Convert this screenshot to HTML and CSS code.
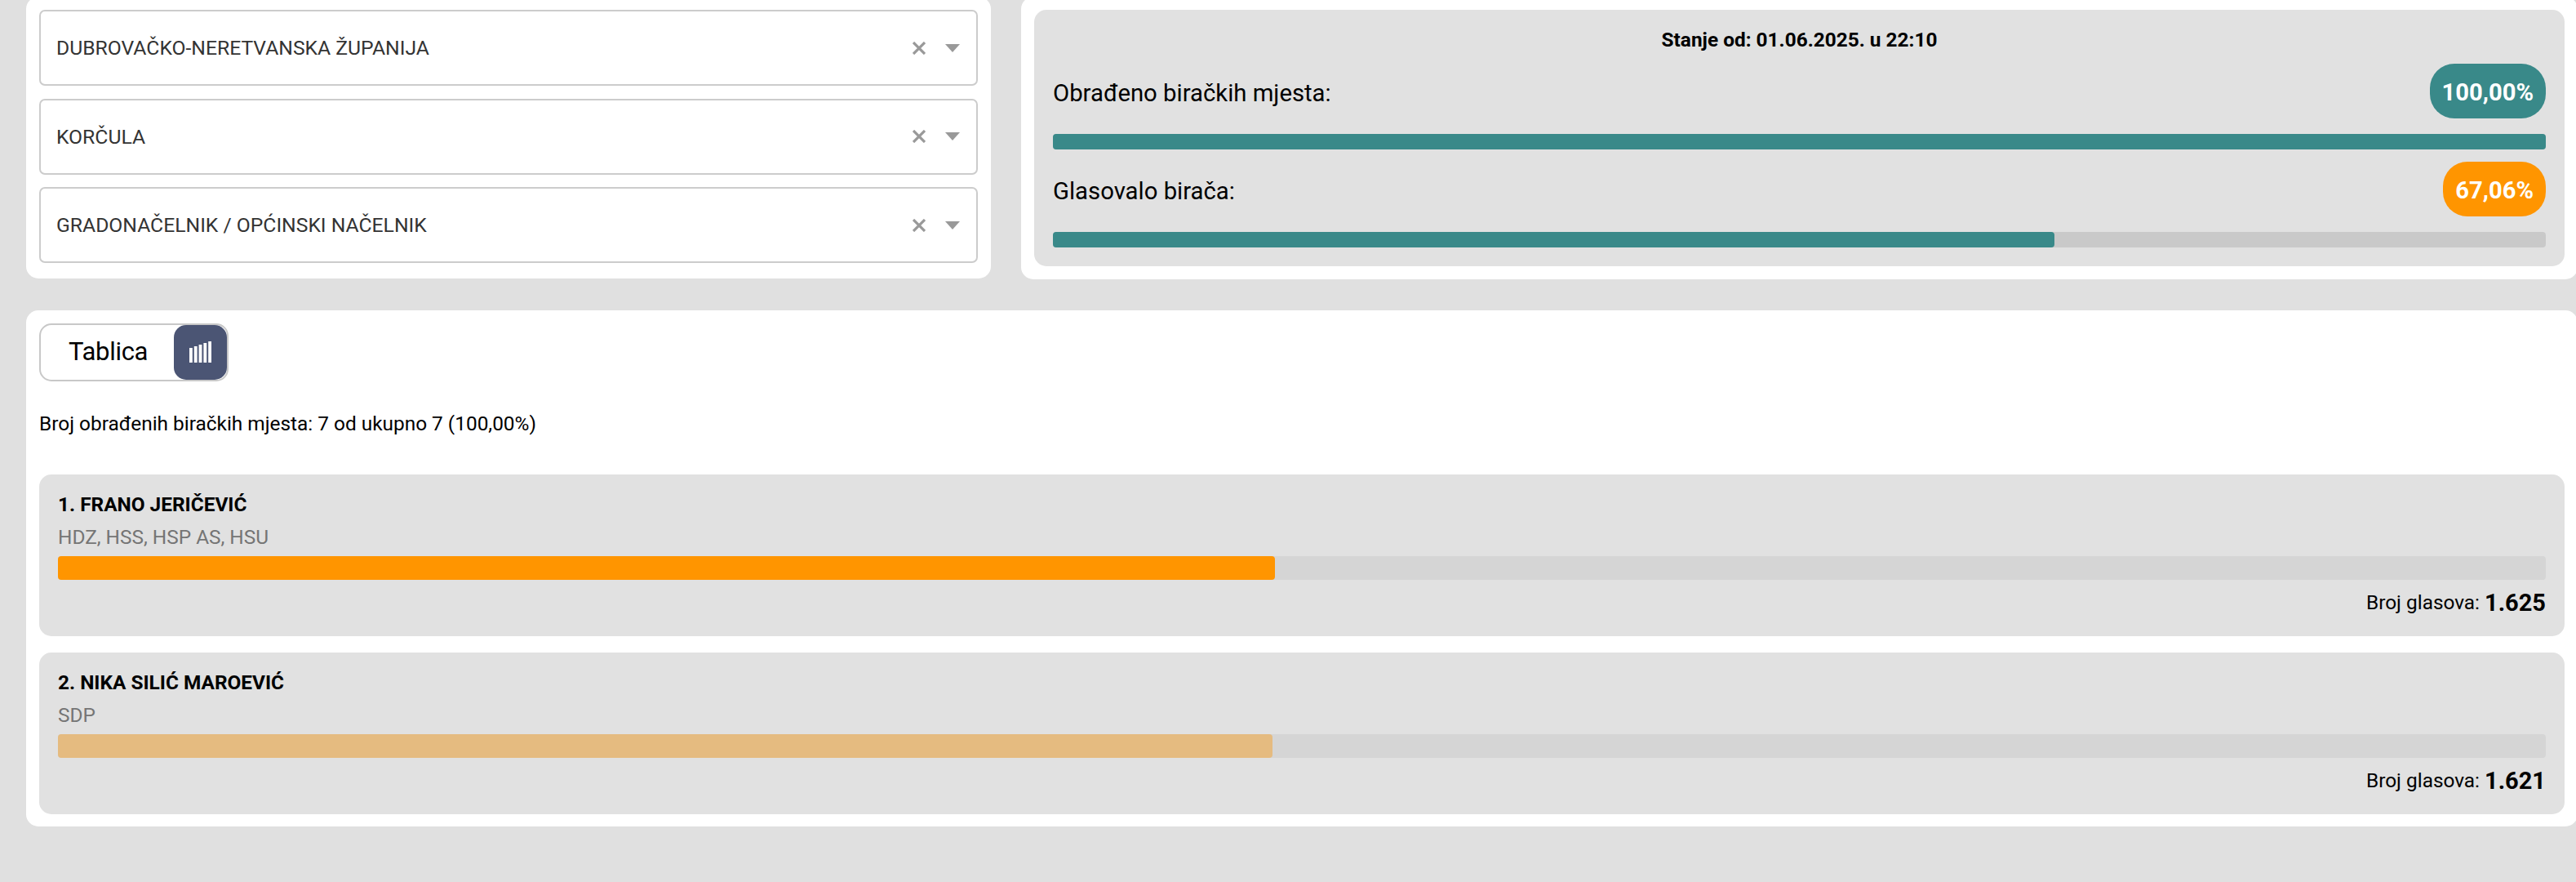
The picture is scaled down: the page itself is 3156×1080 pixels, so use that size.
FILE: index.html
```html
<!DOCTYPE html>
<html lang="hr">
<head>
    <meta charset="UTF-8">
    <meta name="viewport" content="width=device-width, initial-scale=1.0">
    <title>Rezultati izbora</title>
    <link rel="stylesheet" href="styles.css">
</head>
<body>
    <div class="page">
        <div class="top">
            <!-- Filters -->
            <div class="panel filters">
                <div class="select">
                    <span class="value">DUBROVAČKO-NERETVANSKA ŽUPANIJA</span>
                    <svg class="clear" viewBox="0 0 16 16"><path d="M1 1L15 15M15 1L1 15"/></svg>
                    <span class="arrow"></span>
                </div>
                <div class="select">
                    <span class="value">KORČULA</span>
                    <svg class="clear" viewBox="0 0 16 16"><path d="M1 1L15 15M15 1L1 15"/></svg>
                    <span class="arrow"></span>
                </div>
                <div class="select">
                    <span class="value">GRADONAČELNIK / OPĆINSKI NAČELNIK</span>
                    <svg class="clear" viewBox="0 0 16 16"><path d="M1 1L15 15M15 1L1 15"/></svg>
                    <span class="arrow"></span>
                </div>
            </div>

            <!-- Turnout -->
            <div class="panel status">
                <div class="card turnout">
                    <div class="updated">Stanje od: 01.06.2025. u 22:10</div>
                    <div class="row">
                        <span class="label">Obrađeno biračkih mjesta:</span>
                        <span class="badge">100,00%</span>
                    </div>
                    <div class="progress"><div class="fill" style="width: 100%"></div></div>
                    <div class="row">
                        <span class="label">Glasovalo birača:</span>
                        <span class="badge orange">67,06%</span>
                    </div>
                    <div class="progress"><div class="fill" style="width: 67.06%"></div></div>
                </div>
            </div>
        </div>

        <!-- Results -->
        <div class="panel results">
            <div class="toggle">
                <span class="toggle-text">Tablica</span>
                <button type="button" class="toggle-chart" aria-label="Grafikon">
                    <svg viewBox="0 0 27 26"><path d="M0 8h3.8v18H0zM5.8 6h3.8v20H5.8zM11.6 4h3.8v22h-3.8zM17.4 2h3.8v24h-3.8zM23.2 0H27v26h-3.8z"/></svg>
                </button>
            </div>
            <p class="summary">Broj obrađenih biračkih mjesta: 7 od ukupno 7 (100,00%)</p>

            <div class="card candidate">
                <div class="name">1. FRANO JERIČEVIĆ</div>
                <div class="party">HDZ, HSS, HSP AS, HSU</div>
                <div class="votes-bar"><div class="fill" style="width: 48.93%"></div></div>
                <div class="votes">Broj glasova: <b>1.625</b></div>
            </div>
            <div class="card candidate second">
                <div class="name">2. NIKA SILIĆ MAROEVIĆ</div>
                <div class="party">SDP</div>
                <div class="votes-bar"><div class="fill" style="width: 48.81%"></div></div>
                <div class="votes">Broj glasova: <b>1.621</b></div>
            </div>
        </div>
    </div>
</body>
</html>
```
FILE: styles.css
```css
* {
    box-sizing: border-box;
}

body {
    margin: 0;
    height: 1080px;
    overflow: hidden;
    background-color: #e0e0e0;
    font-family: Roboto, Arial, sans-serif;
    font-size: 24.4px;
    color: #000;
}

.page {
    width: 3126px;
    margin: -4px 0 0 32px;
}

.panel {
    padding: 16px;
    background-color: #fff;
    border-radius: 15px;
}

.card {
    background-color: #e1e1e1;
    border-radius: 15px;
}

.top {
    display: flex;
    gap: 37px;
    margin-bottom: 38px;
}

/* Filters */
.filters {
    display: flex;
    flex-direction: column;
    gap: 15.5px;
    width: 1182px;
    height: 345px;
}

.select {
    display: flex;
    align-items: center;
    height: 93px;
    padding: 0 20px 0 19px;
    border: 2px solid #ccc;
    border-radius: 7px;
}

.value {
    flex: 1;
    font-size: 24.7px;
    color: #333;
}

.clear {
    width: 16px;
    height: 16px;
    margin-right: 24px;
    stroke: #999;
    stroke-width: 3.2;
}

.arrow {
    border-top: 10px solid #999;
    border-left: 9.5px solid transparent;
    border-right: 9.5px solid transparent;
}

/* Turnout */
.status {
    flex: 1;
}

.turnout {
    height: 314px;
    padding: 22px 23px 0;
}

.updated {
    height: 44px;
    line-height: 29px;
    text-align: center;
    font-weight: bold;
}

.row {
    display: flex;
    justify-content: space-between;
    align-items: center;
    height: 67px;
}

.label {
    padding-top: 4px;
    font-size: 29.3px;
}

.badge {
    height: 67px;
    padding: 2px 15px 0;
    line-height: 67px;
    border-radius: 30px;
    background-color: #398989;
    color: #fff;
    font-size: 29.2px;
    font-weight: bold;
}

.orange {
    background-color: #ff9500;
}

.progress {
    height: 19px;
    margin: 19px 0 15px;
    border-radius: 4px;
    background-color: #c9c9c9;
}

.progress .fill {
    height: 100%;
    border-radius: 4px;
    background-color: #398989;
}

/* Results */
.results {
    height: 632px;
    padding-top: 15.5px;
}

.toggle {
    display: flex;
    align-items: center;
    justify-content: space-between;
    width: 232px;
    height: 71px;
    border: 2px solid #c8c8c8;
    border-radius: 15px;
}

.toggle-text {
    padding: 0 0 2px 34px;
    font-size: 31px;
    letter-spacing: -0.3px;
}

.toggle-chart {
    display: flex;
    align-items: center;
    justify-content: center;
    width: 65px;
    height: 67px;
    padding: 0;
    border: none;
    border-radius: 15px;
    background-color: #4b5574;
    cursor: pointer;
}

.toggle-chart svg {
    width: 27px;
    height: 26px;
    fill: #fff;
}

.summary {
    margin: 37px 0 48px;
    line-height: 29px;
}

.candidate {
    height: 198px;
    padding: 23px 23px 0;
}

.second {
    margin-top: 20px;
}

.name {
    line-height: 28px;
    font-weight: bold;
}

.party {
    margin: 12px 0 9px;
    line-height: 28px;
    color: #757575;
}

.votes-bar {
    height: 29px;
    border-radius: 4px;
    background-color: #d5d5d5;
}

.votes-bar .fill {
    height: 100%;
    border-radius: 4px;
    background-color: #ff9500;
}

.second .fill {
    background-color: #e5bb80;
}

.votes {
    display: flex;
    justify-content: flex-end;
    align-items: center;
    gap: 6px;
    margin-top: 11px;
    line-height: 34px;
}

.votes b {
    font-size: 29px;
}
```
